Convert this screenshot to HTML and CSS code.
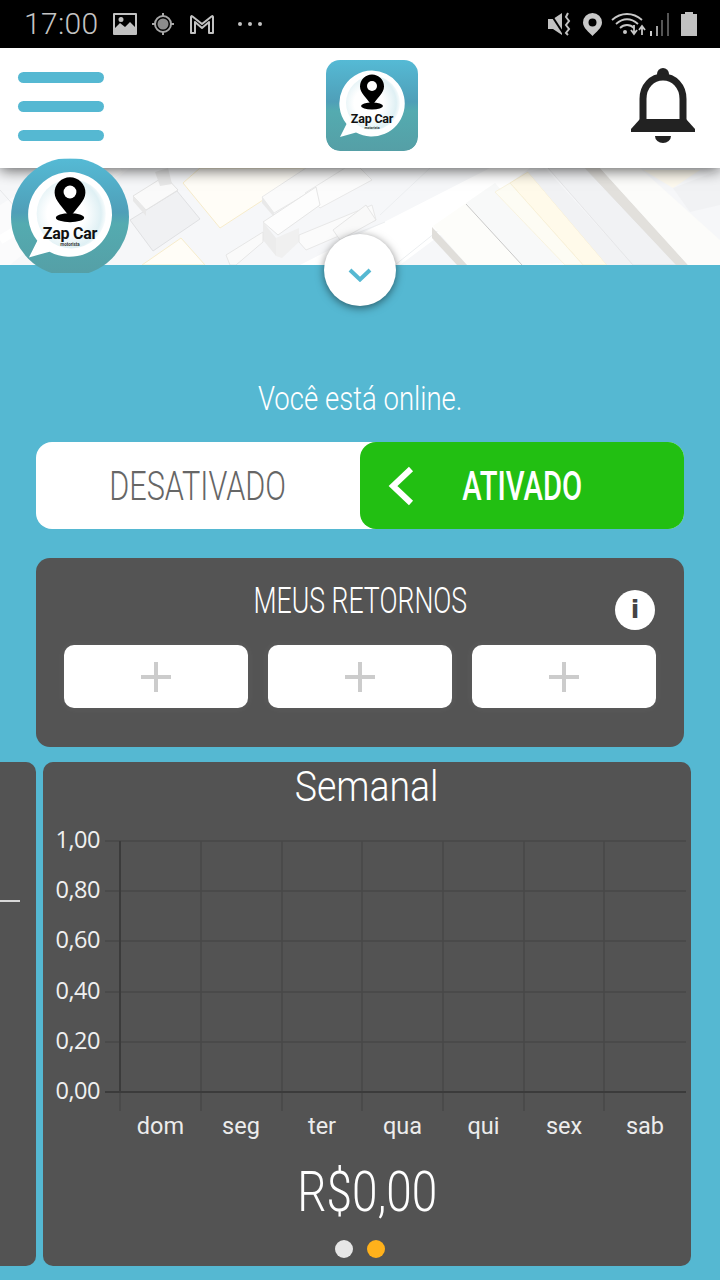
FILE: index.html
```html
<!DOCTYPE html>
<html lang="pt">
<head>
<meta charset="utf-8">
<title>Zap Car</title>
<link rel="stylesheet" href="styles.css">
</head>
<body>
<svg class="defs" width="0" height="0">
  <defs>
    <linearGradient id="tile" x1="0" y1="0" x2="0" y2="1">
      <stop offset="0" stop-color="#55bad5"/>
      <stop offset=".46" stop-color="#4f9fb8"/>
      <stop offset=".56" stop-color="#54abb0"/>
      <stop offset="1" stop-color="#559fa6"/>
    </linearGradient>
    <radialGradient id="bubble" cx=".42" cy=".5" r=".6">
      <stop offset=".45" stop-color="#fff"/>
      <stop offset=".85" stop-color="#dff0f4"/>
      <stop offset="1" stop-color="#fff"/>
    </radialGradient>
    <symbol id="logo" viewBox="0 0 92 91">
      <rect width="92" height="91" fill="url(#tile)"/>
      <path d="M46 10.500A33 33 0 1 1 30 72.500L14 77L20.500 64A33 33 0 0 1 46 10.500Z" fill="#fff"/>
      <circle cx="47" cy="43" r="27" fill="url(#bubble)"/>
      <ellipse cx="46" cy="46" rx="11" ry="3.500" fill="#000"/>
      <path d="M46 46C41 38 34 33 34 26.500A12 12 0 0 1 58 26.500C58 33 51 38 46 46Z" fill="#000"/>
      <circle cx="46" cy="26" r="5" fill="#fff"/>
      <text class="logo-name" x="46" y="62.500" text-anchor="middle">Zap Car</text>
      <text class="logo-sub" x="46" y="68.500" text-anchor="middle">motorista</text>
    </symbol>
  </defs>
</svg>

<div class="status">
  <span class="time">17:00</span>
  <svg class="ic-image" viewBox="0 0 24 22" width="24" height="22"><path fill="#c2c2c2" fill-rule="evenodd" d="M1 0H23A1 1 0 0 1 24 1V21A1 1 0 0 1 23 22H1A1 1 0 0 1 0 21V1A1 1 0 0 1 1 0ZM2 2V15L7 10L12 14L17 9L22 14V2ZM8 4A2.500 2.500 0 1 0 8 9A2.500 2.500 0 0 0 8 4Z"/></svg>
  <svg class="ic-target" viewBox="0 0 22 22" width="22" height="22"><circle cx="11" cy="11" r="8" fill="none" stroke="#a8a8a8" stroke-width="2"/><circle cx="11" cy="11" r="5.500" fill="#8c8c8c"/><path d="M11 0V3M11 19V22M0 11H3M19 11H22" stroke="#a8a8a8" stroke-width="2"/></svg>
  <svg class="ic-mail" viewBox="0 0 26 21" width="26" height="21"><path d="M2 19V3Q2 1.500 3.500 2.500L13 10L22.500 2.500Q24 1.500 24 3V19H20V8L13 14L6 8V19Z" fill="none" stroke="#c2c2c2" stroke-width="2" stroke-linejoin="round"/></svg>
  <span class="dots"><i></i><i></i><i></i></span>
  <svg class="ic-mute" viewBox="0 0 25 24" width="25" height="24"><path fill="#c2c2c2" d="M0 7H5L14 1V23L5 17H0Z"/><path d="M2 1L15 21" stroke="#000" stroke-width="2"/><path d="M20 1L18 5L21 9L18 13L21 17L18 21L20 23" fill="none" stroke="#c2c2c2" stroke-width="2"/></svg>
  <svg class="ic-pin" viewBox="0 0 19 23" width="19" height="23"><path fill="#c8c8c8" fill-rule="evenodd" d="M9.500 0A9.500 9.500 0 0 1 19 9.500C19 15 13 19 9.500 23C6 19 0 15 0 9.500A9.500 9.500 0 0 1 9.500 0ZM9.500 5.500A4 4 0 1 0 9.500 13.500A4 4 0 0 0 9.500 5.500Z"/></svg>
  <svg class="ic-wifi" viewBox="0 0 35 24" width="35" height="24"><path d="M1 8C10 0 22 0 31 8M5 12C12 6 20 6 27 12M9 16C13 12 19 12 23 16" fill="none" stroke="#c8c8c8" stroke-width="1.800"/><circle cx="14" cy="20" r="2" fill="#c8c8c8"/><path d="M23 13V21M20 18L23 22L26 18M31 23V15M28 18L31 14L34 18" fill="none" stroke="#c8c8c8" stroke-width="1.800"/></svg>
  <svg class="ic-signal" viewBox="0 0 22 24" width="22" height="24"><path d="M2 19V24H4V19Z" fill="#d0d0d0"/><path d="M8 14V24H10V14Z" fill="#a0a0a0"/><path d="M13 8V24H15V8ZM19 1V24H21V1Z" fill="#555"/></svg>
  <svg class="ic-battery" viewBox="0 0 16 24" width="16" height="24"><path fill="#c2c2c2" d="M4 0H12V2H16V24H0V2H4Z"/></svg>
</div>

<header class="topbar">
  <div class="burger"><span></span><span></span><span></span></div>
  <svg class="tile"><use href="#logo"/></svg>
  <svg class="bell" viewBox="0 0 64 76" width="64" height="76">
    <circle cx="32" cy="7" r="6" fill="#222"/>
    <path d="M12 60V32C12 19 21 10 32 10C43 10 52 19 52 32V60" fill="none" stroke="#222" stroke-width="7"/>
    <path d="M9 52L0 62V65H64V62L55 52Z" fill="#222"/>
    <path d="M24 69H40A8 7 0 0 1 24 69Z" fill="#222"/>
  </svg>
</header>

<section class="map">
  <svg class="map-art" viewBox="0 168 720 97" width="720" height="97" preserveAspectRatio="none">
    <rect x="0" y="168" width="720" height="97" fill="#f6f7f9"/>
    <path d="M0 205L60 168H130L10 265H0Z" fill="#fbfbfc"/>
    <path d="M120 168L0 240" stroke="#fff" stroke-width="9"/>
    <path d="M300 265L490 168H530L400 265Z" fill="#fff"/>
    <path d="M0 190L40 235L80 265" stroke="#e6e8ea" fill="none"/>
    <path d="M130 220L177 191L200 219L153 251Z" fill="#f0f1f3" stroke="#e0e1e3"/>
    <path d="M133 196L165 176L178 190L146 210Z" fill="#fafafa" stroke="#e3e3e3"/>
    <path d="M133 196L146 210V216L133 201Z" fill="#e8e8e8"/>
    <path d="M155 172L168 168L172 184L160 186Z" fill="#e8e8e8"/>
    <path d="M183 183L220 228L260 202L310 168H200Z" fill="#fffdf7" stroke="#f7eccb"/>
    <path d="M142 265L181 238L205 265Z" fill="#fffdf7" stroke="#f7eccb"/>
    <path d="M306 168L262 197L274 213L350 168Z" fill="#fbfbfb" stroke="#e9e9e9"/>
    <path d="M262 197L274 213V217L262 203Z" fill="#e9e9e9"/>
    <path d="M305 193L345 168H360L372 180L320 208Z" fill="#fcfcfc" stroke="#e9e9e9"/>
    <path d="M263 222L316 187L320 205L278 235Z" fill="#fdfdfd" stroke="#e6e6e6"/>
    <path d="M263 222L276 238V256L263 240Z" fill="#ececec"/>
    <path d="M276 238L299 228V242L282 258L276 256Z" fill="#f0f0f0"/>
    <path d="M299 235L372 205L376 220L306 250L299 242Z" fill="#fbfbfb" stroke="#e8e8e8"/>
    <path d="M226 255L263 232V242L236 265H230Z" fill="#fafafa" stroke="#e6e6e6"/>
    <path d="M333 230L366 205L376 220L340 240Z" fill="#f9f9f9" stroke="#e6e6e6"/>
    <path d="M340 240L385 222M380 215L430 168M395 265L445 225" stroke="#eceef0" fill="none"/>
    <path d="M433 226L495 183L566 265H467Z" fill="#fdfdfa"/>
    <path d="M466 203L495 183L565 263L522 265Z" fill="#f8f9f9"/>
    <path d="M466 204L522 265" stroke="#c8c8c8"/>
    <path d="M432 227V238L457 265H467Z" fill="#e0deda"/>
    <path d="M510 183L528 172L607 265H583Z" fill="#fffaea" stroke="#f8ebc4" stroke-width=".700"/>
    <path d="M495 192L510 183L583 265H565Z" fill="#fdfcf4" stroke="#f6efd5" stroke-width=".700"/>
    <path d="M528 172L545 168L633 265H607Z" fill="#f1f2f4"/>
    <path d="M548 168H585L677 265H633Z" fill="#f1f2f4" stroke="#dcdcde" stroke-width=".600"/>
    <path d="M585 168H600L688 265H676Z" fill="#e2e0dc"/>
    <path d="M600 168H640L720 240V265H688Z" fill="#fcfcfa"/>
    <path d="M643 170L673 188L700 170Z" fill="#fdf9ee"/>
    <path d="M673 188L720 170V205L690 212Z" fill="#f1f2f4"/>
  </svg>
  <div class="avatar"><div class="avatar-circle"><svg><use href="#logo"/></svg></div></div>
  <button class="collapse"><svg viewBox="0 0 24 14" width="24" height="14"><path d="M2 2L12 11.500L22 2" fill="none" stroke="#55b8d2" stroke-width="4"/></svg></button>
</section>

<main class="main">
  <p class="online"><span class="din online-text">Você está online.</span></p>

  <div class="toggle">
    <div class="toggle-off"><span class="din off-text">DESATIVADO</span></div>
    <div class="toggle-on">
      <svg class="toggle-chev" viewBox="0 0 28 40" width="28" height="40"><path d="M24 3L6 20L24 37" fill="none" stroke="#fff" stroke-width="6"/></svg>
      <span class="din on-text">ATIVADO</span>
    </div>
  </div>

  <section class="returns">
    <h2 class="returns-title"><span class="din">MEUS RETORNOS</span></h2>
    <span class="info">i</span>
    <div class="slots">
      <div class="slot"><svg viewBox="0 0 30 30" width="30" height="30"><path d="M15 0V30M0 15H30" stroke="#ccc" stroke-width="4"/></svg></div>
      <div class="slot"><svg viewBox="0 0 30 30" width="30" height="30"><path d="M15 0V30M0 15H30" stroke="#ccc" stroke-width="4"/></svg></div>
      <div class="slot"><svg viewBox="0 0 30 30" width="30" height="30"><path d="M15 0V30M0 15H30" stroke="#ccc" stroke-width="4"/></svg></div>
    </div>
  </section>

  <div class="carousel">
    <article class="card card-prev"><span class="prev-line"></span></article>
    <article class="card">
      <h3 class="card-title"><span class="din">Semanal</span></h3>
      <svg class="chart" viewBox="0 0 648 320" width="648" height="320">
        <g class="grid">
          <path d="M62 21H643M62 71H643M62 121H643M62 172H643M62 222H643"/>
          <path d="M77 21V291M158 21V291M239 21V291M319 21V291M400 21V291M481 21V291M561 21V291"/>
        </g>
        <path class="axis" d="M62 272H643"/>
        <path class="axis" d="M77 21V272"/>
        <g class="ylab">
          <text x="57" y="28">1,00</text>
          <text x="57" y="78">0,80</text>
          <text x="57" y="128">0,60</text>
          <text x="57" y="179">0,40</text>
          <text x="57" y="229">0,20</text>
          <text x="57" y="279">0,00</text>
        </g>
        <g class="xlab">
          <text x="117.500" y="314">dom</text>
          <text x="198" y="314">seg</text>
          <text x="279" y="314">ter</text>
          <text x="359.500" y="314">qua</text>
          <text x="440.500" y="314">qui</text>
          <text x="521" y="314">sex</text>
          <text x="602" y="314">sab</text>
        </g>
      </svg>
      <p class="total"><span class="din">R$0,00</span></p>
      <div class="pager"><i class="pg"></i><i class="pg pg-on"></i></div>
    </article>
  </div>
</main>
</body>
</html>
```

FILE: styles.css
```css
* { box-sizing: border-box; }
html, body { margin: 0; padding: 0; }
body {
  width: 720px;
  height: 1280px;
  overflow: hidden;
  background: #55b8d2;
  font-family: Roboto, "Liberation Sans", sans-serif;
}
.defs { position: absolute; }
.din { display: inline-block; font-weight: 300; white-space: nowrap; transform-origin: center; }

/* status bar */
.status {
  height: 48px;
  background: #000;
  display: flex;
  align-items: center;
  padding-left: 24px;
}
.time { color: #c4c4c4; font-size: 30px; font-weight: 300; line-height: 48px; width: 89px; letter-spacing: .3px; }
.ic-target { margin-left: 15px; }
.ic-mail { margin-left: 15px; }
.ic-mute { margin-left: 0; }
.ic-pin { margin-left: 10px; }
.ic-wifi { margin-left: 9px; }
.ic-signal { margin-left: 2px; }
.ic-battery { margin-left: 11px; }
.dots { display: flex; gap: 6px; margin-left: 23px; margin-right: 286px; }
.dots i { width: 4px; height: 4px; border-radius: 50%; background: #c2c2c2; }

/* top bar */
.topbar {
  position: relative;
  z-index: 2;
  height: 120px;
  background: #fff;
  display: flex;
  align-items: flex-start;
  box-shadow: 0 2px 14px rgba(0, 0, 0, .65);
}
.burger {
  margin: 24px 222px 0 18px;
  width: 86px;
  display: flex;
  flex-direction: column;
  gap: 18px;
}
.burger span { display: block; height: 11px; border-radius: 6px; background: #55b8d2; }
.tile { width: 92px; height: 91px; margin: 12px 213px 0 0; border-radius: 0 0 14px 14px; clip-path: inset(0 round 14px); }
.bell { margin-top: 19px; }
.logo-name { font: 700 12.500px Roboto, sans-serif; fill: #111; letter-spacing: -.2px; }
.logo-sub { font: 700 3.500px Roboto, sans-serif; fill: #333; }

/* map */
.map { position: relative; height: 97px; }
.map-art { display: block; }
.avatar {
  position: absolute;
  z-index: 3;
  left: 11px;
  top: -10px;
  width: 118px;
  height: 115px;
  overflow: hidden;
}
.avatar-circle { width: 118px; height: 118px; border-radius: 50%; overflow: hidden; }
.avatar-circle svg { width: 118px; height: 118px; display: block; }
.collapse {
  position: absolute;
  z-index: 1;
  left: 324px;
  top: 66px;
  width: 72px;
  height: 72px;
  border: 0;
  padding: 0;
  border-radius: 50%;
  background: #fff;
  box-shadow: 0 2px 8px rgba(0, 0, 0, .5);
  display: flex;
  align-items: center;
  justify-content: center;
}
.collapse svg { margin-top: 10px; }

/* main */
.main { height: 1015px; padding-top: 112px; overflow: hidden; }
.online { margin: 0 0 23px; height: 42px; line-height: 42px; text-align: center; color: #fff; font-size: 34px; }
.online-text { transform: scaleX(.81); }

.toggle {
  margin: 0 36px;
  height: 87px;
  display: flex;
  background: #fff;
  border-radius: 16px;
}
.toggle-off { width: 324px; display: flex; align-items: center; justify-content: center; color: #666; font-size: 40px; padding-top: 2px; }
.off-text { transform: scaleX(.765); }
.toggle-on {
  width: 324px;
  background: #22bf12;
  border-radius: 16px;
  display: flex;
  align-items: center;
  padding-left: 27px;
  color: #fff;
  font-size: 40px;
}
.toggle-chev { flex: none; }
.on-text { font-weight: 500; transform: scaleX(.73); margin-left: 25px; padding-top: 2px; }

.returns {
  position: relative;
  margin: 29px 36px 0;
  height: 189px;
  background: #545454;
  border-radius: 14px;
  padding: 22px 28px 0;
}
.returns-title { margin: 0 0 22px; height: 43px; line-height: 43px; text-align: center; color: #fff; font-size: 36px; font-weight: 400; }
.returns-title .din { transform: scaleX(.74); }
.info {
  position: absolute;
  left: 579px;
  top: 32px;
  width: 40px;
  height: 40px;
  border-radius: 50%;
  background: #fff;
  color: #444;
  font: 700 25px/40px "DejaVu Sans", sans-serif;
  text-align: center;
}
.slots { display: grid; grid-template-columns: repeat(3, 184px); gap: 20px; }
.slot {
  height: 63px;
  background: #fff;
  border-radius: 10px;
  display: flex;
  align-items: center;
  justify-content: center;
  box-shadow: 0 0 10px rgba(255, 255, 255, .06);
}

.carousel { display: flex; gap: 7px; margin: 15px 0 0 -612px; }
.card { position: relative; flex: none; width: 648px; height: 504px; background: #535353; border-radius: 10px; }
.prev-line { position: absolute; right: 16px; top: 138px; width: 20px; height: 1.500px; background: #d8d8d8; }
.card-title { margin: 0; padding-top: 0; height: 58px; line-height: 48px; font-size: 43px; font-weight: 400; color: #fff; text-align: center; }
.card-title .din { transform: scaleX(.87); }
.chart { display: block; }
.grid path { fill: none; stroke: #484848; stroke-width: 1.500; }
.axis { fill: none; stroke: #3b3b3b; stroke-width: 2; }
.ylab text { font: 400 23.500px "Open Sans", sans-serif; fill: #f0f0f0; text-anchor: end; letter-spacing: -.5px; }
.xlab text { font: 400 23.500px Roboto, sans-serif; fill: #ececec; text-anchor: middle; }
.total { margin: 18px 0 0; height: 68px; line-height: 68px; text-align: center; color: #fff; font-size: 56px; }
.total .din { font-weight: 300; transform: scaleX(.82); }
.pager { display: flex; justify-content: center; gap: 14px; margin: 14px 14px 0 0; }
.pg { width: 18px; height: 18px; border-radius: 50%; background: #e6e6e6; }
.pg-on { background: #ffb11b; }
```
